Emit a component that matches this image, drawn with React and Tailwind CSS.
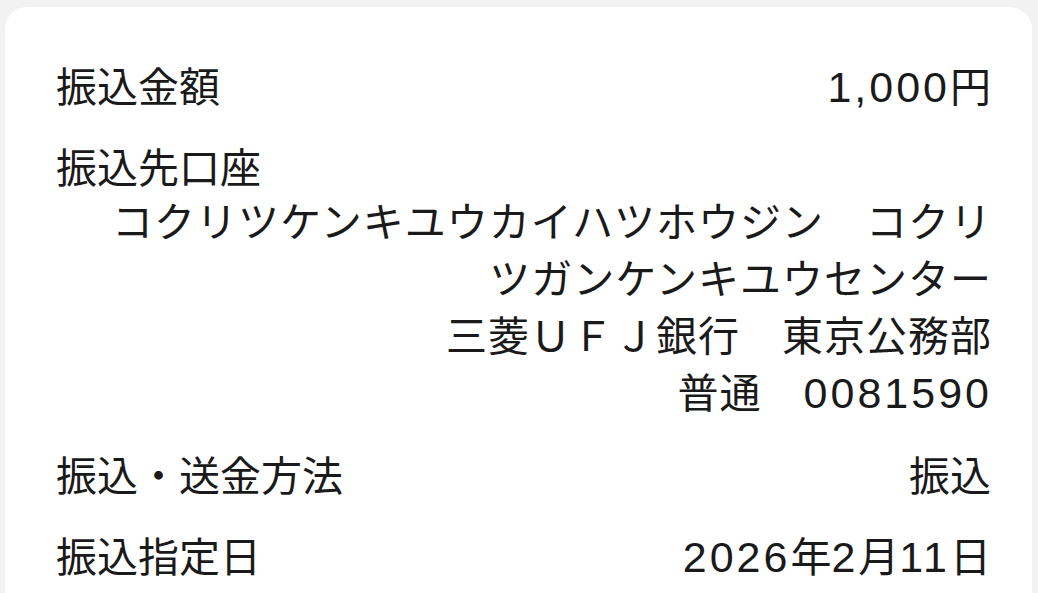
import React from 'react';

const rows = [
  { label: '振込金額', value: '1,000円' },
  {
    label: '振込先口座',
    block: [
      'コクリツケンキユウカイハツホウジン　コクリ',
      'ツガンケンキユウセンター',
      '三菱ＵＦＪ銀行　東京公務部',
      '普通　0081590',
    ],
  },
  { label: '振込・送金方法', value: '振込' },
  { label: '振込指定日', value: '2026年2月11日' },
];

// digit runs get a Helvetica-like face, wider than the CJK font's numerals
const Num = ({ text }) =>
  text.split(/([0-9,]+)/).map((part, i) =>
    /^[0-9,]+$/.test(part) ? (
      <span
        key={i}
        className="tracking-[3px] text-[43px] leading-none"
        style={{ fontFamily: '"Liberation Sans", Arial, sans-serif' }}
      >
        {part}
      </span>
    ) : (
      <span key={i}>{part}</span>
    )
  );

const App = () => {
  return (
    <div
      className="min-h-screen bg-[#f2f2f2] pt-[7px] pl-[5px] pr-[6px] overflow-hidden"
      style={{ fontFamily: '"Noto Sans CJK JP", "Noto Sans", sans-serif' }}
    >
      <div className="bg-white rounded-[22px] pl-[51px] pr-[41px] pt-[49px] pb-10 text-[41px] leading-[56px] text-[#1a1a1a] min-h-[620px]">
        <div className="flex flex-col gap-[25px]">
          {rows.map((row) =>
            row.block ? (
              <div key={row.label} className="pb-px">
                <div>{row.label}</div>
                <div className="-mt-[2px] -mr-px text-right whitespace-nowrap leading-[57px] tracking-[1px]">
                  {row.block.map((line) => (
                    <div key={line}>
                      <Num text={line} />
                    </div>
                  ))}
                </div>
              </div>
            ) : (
              <div key={row.label} className="flex justify-between items-start">
                <span>{row.label}</span>
                <span className="text-right">
                  <Num text={row.value} />
                </span>
              </div>
            )
          )}
        </div>
      </div>
    </div>
  );
};

export default App;
